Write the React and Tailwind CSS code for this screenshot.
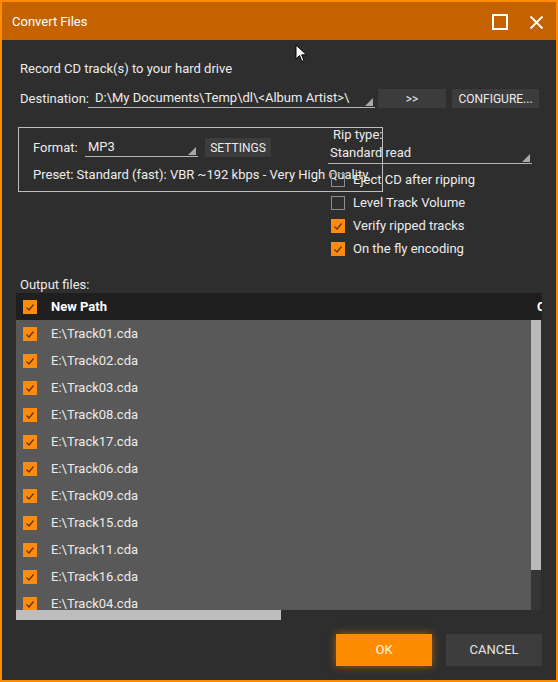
import React from 'react';

const tracks = [
  'Track01', 'Track02', 'Track03', 'Track08', 'Track17', 'Track06',
  'Track09', 'Track15', 'Track11', 'Track16', 'Track04', 'Track05',
];

function Check({ on }) {
  if (!on) {
    return <div className="h-[14px] w-[14px] shrink-0 border border-[#8c8c8c]" />;
  }
  return (
    <div className="flex h-[14px] w-[14px] shrink-0 items-center justify-center bg-[#fb8c10]">
      <svg width="14" height="14" viewBox="0 0 14 14">
        <polyline points="3.5,7.5 6,10 10.5,4.5" fill="none" stroke="#6a2c00" strokeWidth="1.2" />
      </svg>
    </div>
  );
}

function Corner() {
  return (
    <svg width="8" height="8" viewBox="0 0 8 8" className="shrink-0">
      <polygon points="8,0 8,8 0,8" fill="#a8a8a8" />
    </svg>
  );
}

function Combo({ className, textClass, children }) {
  return (
    <div className={`flex items-end border-b border-[#b4b4b4] ${className}`}>
      <div className={`self-center overflow-hidden whitespace-nowrap ${textClass}`}>{children}</div>
      <div className="flex-1" />
      <div className="mb-[1px] mr-[2px]">
        <Corner />
      </div>
    </div>
  );
}

export default function App() {
  return (
    <div
      className="relative flex h-[682px] w-[558px] flex-col border-2 border-[#ff8c00] bg-[#2e2e2e] text-[13px] text-[#ececec]"
      style={{ fontFamily: 'Roboto, "Liberation Sans", sans-serif' }}
    >
      {/* title bar */}
      <div className="flex h-[38px] shrink-0 items-center bg-[#c46200] pl-[10px] pr-[12px] pt-[2px]">
        <span className="flex-1 text-white">Convert Files</span>
        <svg width="16" height="16" viewBox="0 0 16 16" className="mr-[21px]">
          <rect x="1" y="1" width="14" height="14" fill="none" stroke="#fff" strokeWidth="2" />
        </svg>
        <svg width="15" height="15" viewBox="0 0 15 15">
          <path d="M1.5 1.5 L13.5 13.5 M13.5 1.5 L1.5 13.5" stroke="#fff" strokeWidth="1.8" />
        </svg>
      </div>

      {/* body */}
      <div className="flex flex-1 flex-col px-[14px] pt-[21px]">
        <div className="ml-[4px] leading-[16px]">Record CD track(s) to your hard drive</div>

        <div className="mt-[12px] ml-[4px] flex h-[19px] items-center">
          <span className="w-[68px]">Destination:</span>
          <Combo className="h-[19px] w-[287px]" textClass="w-[262px] pl-[7px]">
            D:\My Documents\Temp\dl\&lt;Album Artist&gt;\&lt;Album&gt;\&lt;Track#&gt; - &lt;Title&gt;
          </Combo>
          <div className="ml-[3px] flex h-[19px] w-[68px] items-center justify-center bg-[#3c3c3c] text-[12px]">&gt;&gt;</div>
          <div className="ml-[6px] flex h-[19px] w-[87px] items-center justify-center bg-[#3c3c3c] text-[12px]">
            CONFIGURE...
          </div>
        </div>

        <div className="mt-[19px] flex items-start">
          {/* format group */}
          <div className="ml-[2px] h-[65px] w-[365px] shrink-0 border border-[#bdbdbd] pl-[14px] pt-[10px]">
            <div className="flex h-[19px] items-center">
              <span className="w-[52px]">Format:</span>
              <Combo className="h-[19px] w-[113px]" textClass="pl-[3px]">MP3</Combo>
              <div className="ml-[7px] flex h-[19px] w-[66px] items-center justify-center bg-[#3c3c3c] text-[12px]">
                SETTINGS
              </div>
            </div>
            <div className="mt-[10px] whitespace-nowrap leading-[16px]">
              Preset: Standard (fast): VBR ~192 kbps - Very High Quality
            </div>
          </div>

          {/* rip options */}
          <div className="ml-[-55px] w-[204px] shrink-0">
            <div className="pl-[5px] leading-[16px]">Rip type:</div>
            <Combo className="h-[21px] w-[204px]" textClass="pl-[2px]">Standard read</Combo>
            <div className="mt-[4px]">
              {[
                ['Eject CD after ripping', false],
                ['Level Track Volume', false],
                ['Verify ripped tracks', true],
                ['On the fly encoding', true],
              ].map(([label, on]) => (
                <div key={label} className="flex h-[23px] items-center gap-[8px] pl-[3px]">
                  <Check on={on} />
                  <span className="whitespace-nowrap">{label}</span>
                </div>
              ))}
            </div>
          </div>
        </div>

        <div className="mt-[17px] ml-[4px] leading-[16px]">Output files:</div>

        {/* file list */}
        <div className="flex flex-col">
          <div className="flex h-[27px] items-center overflow-hidden whitespace-nowrap bg-[#1f1f1f] pl-[7px]">
            <Check on />
            <span className="ml-[14px] w-[486px] shrink-0 font-bold text-white">New Path</span>
            <span className="shrink-0 font-bold text-white">Converted</span>
          </div>
          <div className="flex h-[290px]">
            <div className="flex-1 overflow-hidden bg-[#595959]">
              {tracks.map((t) => (
                <div key={t} className="flex h-[27px] items-center pl-[7px]">
                  <Check on />
                  <span className="ml-[14px]">E:\{t}.cda</span>
                </div>
              ))}
            </div>
            <div className="w-[10px] bg-[#353535]">
              <div className="h-[250px] bg-[#b9b9b9]" />
            </div>
            <div className="w-[1px]" />
          </div>
          <div className="h-[10px]">
            <div className="h-[10px] w-[265px] bg-[#bdbdbd]" />
          </div>
        </div>

        <div className="mt-[14px] flex justify-end gap-[14px]">
          <div className="flex h-[32px] w-[96px] items-center justify-center bg-[#ff8c00] text-[#fff4e6] shadow-[0_0_8px_rgba(255,140,0,0.55)]">
            OK
          </div>
          <div className="flex h-[32px] w-[96px] items-center justify-center bg-[#3d3d3d] text-[#e6e6e6]">
            CANCEL
          </div>
        </div>
      </div>

      {/* mouse pointer */}
      <svg width="14" height="20" viewBox="0 0 14 20" className="absolute left-[293px] top-[42px]">
        <path d="M1 1 L1 15 L4.5 11.5 L7 17.5 L9 16.6 L6.6 10.8 L11.5 10.8 Z" fill="#fff" stroke="#000" strokeWidth="1" />
      </svg>
    </div>
  );
}
